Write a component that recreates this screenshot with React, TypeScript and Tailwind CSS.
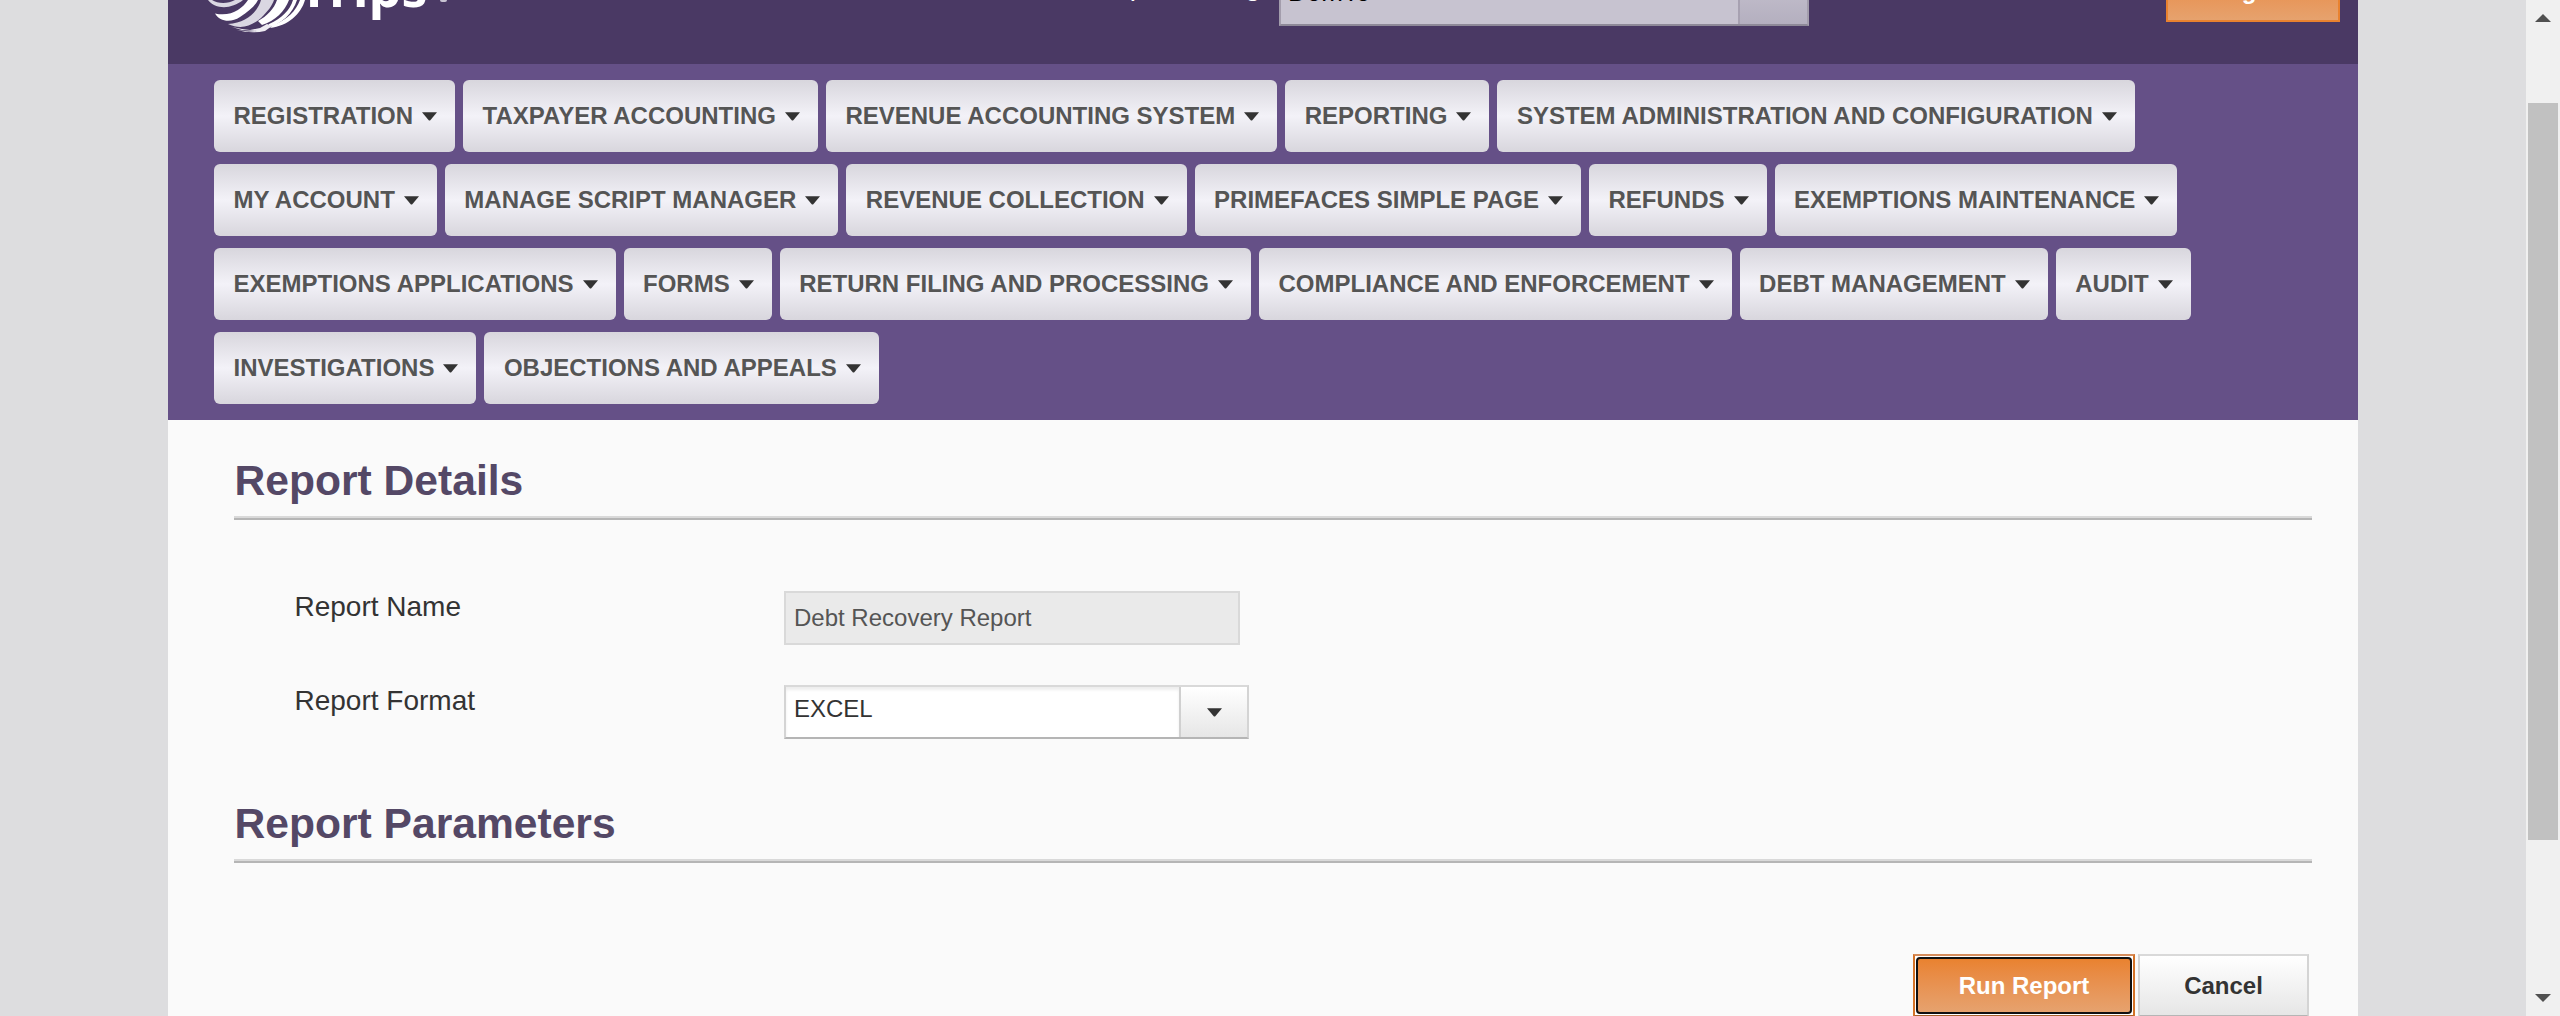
const menuRows = [
  ["Registration", "Taxpayer Accounting", "Revenue Accounting System", "Reporting", "System Administration and Configuration"],
  ["My Account", "Manage Script Manager", "Revenue Collection", "PrimeFaces Simple Page", "Refunds", "Exemptions Maintenance"],
  ["Exemptions Applications", "Forms", "Return Filing and Processing", "Compliance and Enforcement", "Debt Management", "Audit"],
  ["Investigations", "Objections and Appeals"],
];

function Caret({ className = "" }: { className?: string }) {
  return (
    <svg className={className} width="15" height="9" viewBox="0 0 15 9" fill="#333">
      <path d="M0 .3h15L8.3 8.2Q7.5 9 6.700 8.200Z" />
    </svg>
  );
}

function Logo() {
  return (
    <svg width="100" height="34" viewBox="0 0 100 34" fill="none" className="shrink-0">
      <path d="M1 0C9 10 25 9 36 0H28C21 4 11 4 5 0Z" fill="#dad7e2" />
      <path d="M8 13.500C13 22 24 23 33 17C42 11 48 6 51 0H41C35 9 24 17 8 13.500Z" fill="#fff" />
      <path d="M21 24C34 30 45 26 54 18C61 11 65 6 67 0H54C51 11 40 23 21 24Z" fill="#dad7e2" />
      <path d="M70 0H82C78 11 68 21 55 25L51 21C60 16 67 9 70 0Z" fill="#fff" />
      <path d="M86 0H90C86 13 75 24 60 28L62 24C75 18 83 10 86 0Z" fill="#fff" />
      <path d="M93 0H98C94 14 81 26 63 28L66 25C80 20 89 11 93 0Z" fill="#fff" />
      <path d="M25 27L35 29L43 30L53 28L60 24L65 26L58 31Q44 34 30 30L42 31.500L50 31L35 30Z" fill="#eeecf2" />
    </svg>
  );
}

function Heading({ children }: { children: string }) {
  return (
    <div className="mx-[66px] w-[2078px]">
      <h2 className="pl-[0.500px] text-[42.600px] leading-[48px] font-bold text-[#544866]">{children}</h2>
      <div className="mt-[12px] h-1 border-t-2 border-b-2 border-t-[#d9d9d9] border-b-[#b5b5b5]" />
    </div>
  );
}

export default function App() {
  return (
    <div className="flex h-[1016px] w-[2560px] overflow-hidden bg-[#dddddf] font-['Liberation_Sans',Arial,sans-serif] text-[24px] text-[#333]">
      <div className="w-[168px] shrink-0" />
      <main className="flex w-[2190px] shrink-0 flex-col bg-[#fafafa]">
        <header className="flex h-16 shrink-0 items-start overflow-hidden bg-[#4a3964]">
          <div className="flex w-[926px] shrink-0 items-start pl-[39px]">
            <Logo />
            <span className="-mt-[53px] -ml-[8px] w-[141px] font-['Open_Sans',sans-serif] text-[52px] leading-[80px] font-bold text-white">Trips</span>
            <span className="h-[2px] w-[7px] rounded-b bg-[#c8c3d2]" />
          </div>
          <div className="-mt-[28px] w-[185px] shrink-0 text-[28px] leading-[28px] whitespace-nowrap text-white">Representing</div>
          <div className="-mt-[28px] flex h-[54px] w-[530px] shrink-0 border-2 border-[#8e8998] border-x-[#a39dac] bg-[#c7c3d0]">
            <span className="grow pl-[7px] text-[26px] leading-[36px] text-black">DomTo</span>
            <span className="w-[69px] border-l-2 border-[#a7a1b1] bg-gradient-to-b from-[#c7c3d0] to-[#b4afbf]" />
          </div>
          <button className="-mt-[40px] ml-[357px] h-[62px] w-[174px] shrink-0 border-2 border-[#e9822f] bg-gradient-to-b from-[#e9822f] to-[#e6a26e] font-bold text-white">Logout</button>
        </header>
        <nav className="flex h-[356px] shrink-0 flex-col gap-3 bg-[#655087] pt-4 pl-[46px]">
          {menuRows.map((row) => (
            <div key={row[0]} className="flex gap-2">
              {row.map((label) => (
                <button key={label} className="flex h-[72px] items-center rounded-md bg-gradient-to-b from-[#d8d6dd] via-[#f3f2f8] to-[#d8d6dd] pr-[18px] pl-[19.500px] font-bold whitespace-nowrap text-[#555] uppercase">
                  {label}
                  <Caret className="ml-[9px]" />
                </button>
              ))}
            </div>
          ))}
        </nav>
        <section className="pt-[36px]">
          <Heading>Report Details</Heading>
          <div className="mt-[71px] flex">
            <label className="w-[616px] pl-[126.500px] text-[28px] leading-[32px]">Report Name</label>
            <div className="h-[54px] w-[456px] border-2 border-[#d9d9d9] bg-[#eaeaea] pl-[8px] leading-[50px] text-[#555]">Debt Recovery Report</div>
          </div>
          <div className="mt-[40px] flex">
            <label className="w-[616px] pl-[126.500px] text-[28px] leading-[32px]">Report Format</label>
            <div className="flex h-[54px] w-[465px] border-2 border-x-[#d4d4d4] border-t-[#d9d9d9] border-b-[#b5b5b5] bg-white">
              <span className="grow pl-[8px] leading-[44px] shadow-[inset_0_3px_3px_#eeeeee]">EXCEL</span>
              <span className="flex w-[68px] items-center justify-center border-l-2 border-[#d0d0d0] bg-gradient-to-b from-white to-[#e6e6e6]">
                <Caret />
              </span>
            </div>
          </div>
          <div className="mt-[60px]">
            <Heading>Report Parameters</Heading>
          </div>
          <div className="mt-[91px] flex justify-end gap-[3px] pr-[49px]">
            <button className="h-[63px] w-[222px] border-2 border-x-[#d57327] border-t-[#d58d5c] border-b-[#a9622c] bg-white p-px font-bold text-white">
              <span className="flex h-full items-center justify-center rounded-[4px] border-2 border-[#101010] bg-gradient-to-b from-[#e9822f] to-[#e6a26e]">Run Report</span>
            </button>
            <button className="h-[63px] w-[171px] border-2 border-x-[#d4d4d4] border-t-[#d9d9d9] border-b-[#b5b5b5] bg-gradient-to-b from-white to-[#e6e6e6] font-bold">Cancel</button>
          </div>
        </section>
      </main>
      <div className="w-[168px] shrink-0" />
      <aside className="flex w-[34px] shrink-0 flex-col items-center bg-[#f0f0f0]">
        <svg className="mt-[14px] shrink-0" width="16" height="8" viewBox="0 0 16 8" fill="#505050"><path d="M0 8L8 0L16 8Z" /></svg>
        <div className="mt-[81px] h-[737px] w-[30px] shrink-0 bg-[#c1c1c1]" />
        <svg className="mt-[154px] shrink-0" width="16" height="8" viewBox="0 0 16 8" fill="#505050"><path d="M0 0H16L8 8Z" /></svg>
      </aside>
    </div>
  );
}
